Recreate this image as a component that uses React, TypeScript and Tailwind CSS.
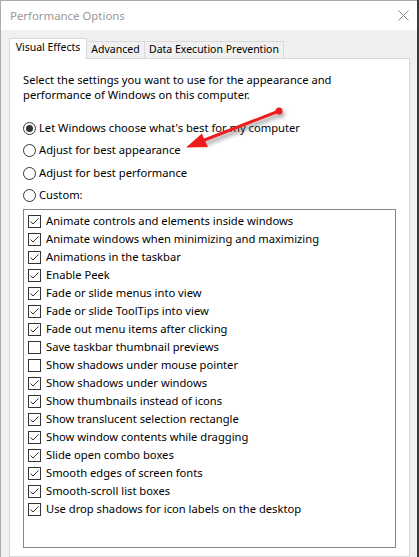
import React from 'react';

const effects: [string, boolean][] = [
  ['Animate controls and elements inside windows', true],
  ['Animate windows when minimizing and maximizing', true],
  ['Animations in the taskbar', true],
  ['Enable Peek', true],
  ['Fade or slide menus into view', true],
  ['Fade or slide ToolTips into view', true],
  ['Fade out menu items after clicking', true],
  ['Save taskbar thumbnail previews', false],
  ['Show shadows under mouse pointer', false],
  ['Show shadows under windows', true],
  ['Show thumbnails instead of icons', true],
  ['Show translucent selection rectangle', true],
  ['Show window contents while dragging', true],
  ['Slide open combo boxes', true],
  ['Smooth edges of screen fonts', true],
  ['Smooth-scroll list boxes', true],
  ['Use drop shadows for icon labels on the desktop', true],
];

const radios = [
  "Let Windows choose what's best for my computer",
  'Adjust for best appearance',
  'Adjust for best performance',
  'Custom:',
];

function Radio({ label, checked }: { label: string; checked?: boolean }) {
  return (
    <div className="flex items-center h-[22.5px]">
      <span className="w-[13px] h-[13px] rounded-full border border-[#333333] bg-white flex items-center justify-center shrink-0">
        {checked && <span className="w-[7px] h-[7px] rounded-full bg-[#333333]" />}
      </span>
      <span className="ml-[3px] whitespace-nowrap">{label}</span>
    </div>
  );
}

function Check({ label, checked }: { label: string; checked: boolean }) {
  return (
    <div className="flex items-center h-[18px]">
      <span className="w-[13px] h-[13px] border border-[#333333] bg-white shrink-0 flex items-center justify-center">
        {checked && (
          <svg width="11" height="11" viewBox="0 0 11 11">
            <polyline points="1.5,5.5 4,8 9.5,2.5" fill="none" stroke="#333333" strokeWidth="1" />
          </svg>
        )}
      </span>
      <span className="ml-[5px] whitespace-nowrap">{label}</span>
    </div>
  );
}

export default function App() {
  return (
    <div className="relative w-[419px] h-[557px] overflow-hidden bg-[#3c3c3c] font-['Noto_Sans','Liberation_Sans',sans-serif] text-[11.2px] text-black">
      <div className="w-[417px] h-full flex flex-col border-l border-t border-[#ababab] bg-[#f0f0f0]">
        {/* title bar */}
        <div className="h-[29px] bg-white flex items-center justify-between pl-[9px] pr-[8px]">
          <span className="text-[#999999] text-[11.4px]">Performance Options</span>
          <svg width="11" height="11" viewBox="0 0 11 11">
            <path d="M0.5 0.5 L10.5 10.5 M10.5 0.5 L0.5 10.5" stroke="#8a8a8a" strokeWidth="1" />
          </svg>
        </div>

        <div className="flex-1 flex flex-col pl-[8px] pr-[7px] pt-[8px]">
          {/* tabs */}
          <div className="flex items-end h-[20px] whitespace-nowrap text-[10.5px]">
            <div className="relative z-10 -mb-px w-[78px] h-[21px] bg-white border border-b-0 border-[#d9d9d9] flex items-center justify-center pb-[2px]">
              Visual Effects
            </div>
            <div className="w-[58px] h-[17px] border-t border-r border-[#d9d9d9] flex items-center justify-center">
              Advanced
            </div>
            <div className="w-[139px] h-[17px] border-t border-r border-[#d9d9d9] flex items-center justify-center">
              Data Execution Prevention
            </div>
          </div>

          {/* tab pane */}
          <div className="flex-1 bg-white border border-[#d9d9d9] pl-[13px] pt-[13px]">
            <p className="leading-[15px]">
              Select the settings you want to use for the appearance and
              <br />
              performance of Windows on this computer.
            </p>

            <div className="mt-[15px]">
              {radios.map((r, i) => (
                <Radio key={r} label={r} checked={i === 0} />
              ))}
            </div>

            <div className="mt-[2px] w-[373px] h-[339px] border border-[#828790] pl-[4px] pt-[2px]">
              {effects.map(([label, on]) => (
                <Check key={label} label={label} checked={on} />
              ))}
            </div>
          </div>
        </div>
      </div>

      {/* red annotation arrow */}
      <svg className="absolute inset-0 pointer-events-none" width="419" height="557" viewBox="0 0 419 557">
        <defs>
          <filter id="sh" x="-20%" y="-50%" width="140%" height="200%">
            <feGaussianBlur stdDeviation="2" />
          </filter>
        </defs>
        <g filter="url(#sh)" opacity="0.55" transform="translate(2 3)">
          <line x1="279" y1="111" x2="200" y2="142" stroke="#555555" strokeWidth="4" />
          <circle cx="279" cy="111" r="3.5" fill="#555555" />
        </g>
        <line x1="279" y1="111" x2="202" y2="141" stroke="#ee1c1c" strokeWidth="3" strokeLinecap="round" />
        <circle cx="279" cy="111" r="3.5" fill="#ee1c1c" />
        <polygon points="186,147.5 202,133.5 204.5,140 208,147" fill="#ee1c1c" />
      </svg>
    </div>
  );
}
